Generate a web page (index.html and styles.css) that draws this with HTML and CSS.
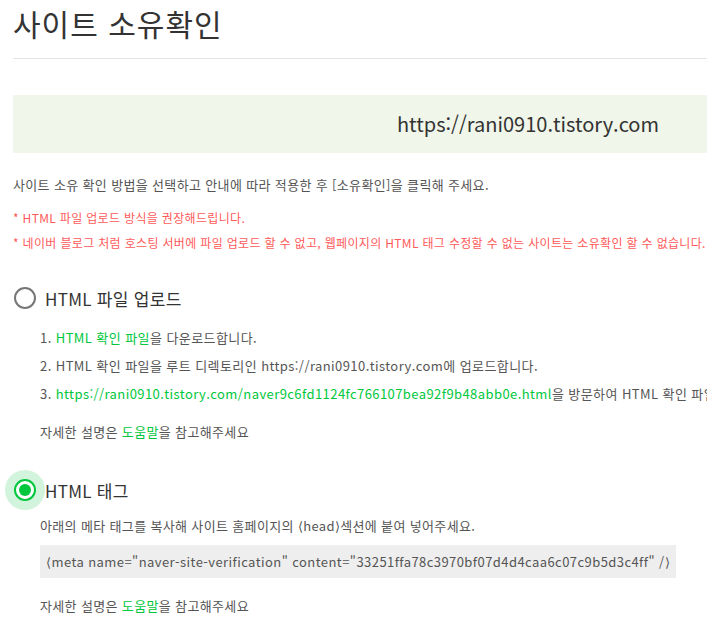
FILE: index.html
```html
<!DOCTYPE html>
<html lang="ko">
<head>
    <meta charset="UTF-8">
    <meta name="viewport" content="width=device-width, initial-scale=1.0">
    <title>사이트 소유확인</title>
    <link rel="stylesheet" href="styles.css">
</head>
<body>
    <div class="container">
        <h1 class="page-title">사이트 소유확인</h1>

        <div class="site-bar">https://rani0910.tistory.com</div>

        <p class="intro">사이트 소유 확인 방법을 선택하고 안내에 따라 적용한 후 [소유확인]을 클릭해 주세요.</p>
        <p class="notice">* HTML 파일 업로드 방식을 권장해드립니다.</p>
        <p class="notice">* 네이버 블로그 처럼 호스팅 서버에 파일 업로드 할 수 없고, 웹페이지의 HTML 태그 수정할 수 없는 사이트는 소유확인 할 수 없습니다.</p>

        <div class="method">
            <label class="method-head">
                <span class="radio"></span>
                <span class="method-title">HTML 파일 업로드</span>
            </label>
            <div class="method-body">
                <ol class="steps">
                    <li>1. <a class="link">HTML 확인 파일</a>을 다운로드합니다.</li>
                    <li>2. HTML 확인 파일을 루트 디렉토리인 https://rani0910.tistory.com에 업로드합니다.</li>
                    <li>3. <a class="link">https://rani0910.tistory.com/naver9c6fd1124fc766107bea92f9b48abb0e.html</a>을 방문하여 HTML 확인 파일이 정상적으로 보이는지 확인합니다.</li>
                </ol>
                <p class="help">자세한 설명은 <a class="link">도움말</a>을 참고해주세요</p>
            </div>
        </div>

        <div class="method">
            <label class="method-head">
                <span class="radio checked"></span>
                <span class="method-title">HTML 태그</span>
            </label>
            <div class="method-body">
                <p class="desc">아래의 메타 태그를 복사해 사이트 홈페이지의 &lang;head&rang;섹션에 붙여 넣어주세요.</p>
                <div class="code">&lang;meta name="naver-site-verification" content="33251ffa78c3970bf07d4d4caa6c07c9b5d3c4ff" /&rang;</div>
                <p class="help">자세한 설명은 <a class="link">도움말</a>을 참고해주세요</p>
            </div>
        </div>
    </div>
</body>
</html>
```

FILE: styles.css
```css
html, body {
    overflow: hidden;
}

body {
    margin: 0;
    font-family: "Noto Sans CJK KR", "Noto Sans", sans-serif;
    color: #555;
    background-color: #fff;
}

.container {
    width: 1030px;
    margin-left: 13px;
}

.page-title {
    margin: 0;
    padding: 0 0 12px;
    font-size: 30px;
    font-weight: 400;
    line-height: 46px;
    color: #333;
    border-bottom: 1px solid #e3e3e3;
    letter-spacing: 1px;
}

.site-bar {
    margin-top: 36px;
    height: 58px;
    line-height: 58px;
    background-color: #f0f6e9;
    text-align: center;
    font-size: 20px;
    color: #333;
}

p {
    margin: 0;
}

.intro {
    margin-top: 22px;
    font-size: 13px;
    line-height: 20px;
    letter-spacing: 0.35px;
}

.notice {
    margin-top: 13px;
    font-size: 12px;
    line-height: 20px;
    color: #ff5a5a;
    letter-spacing: 0.33px;
}

.notice + .notice {
    margin-top: 5px;
}

.method {
    margin-top: 32px;
}

.method + .method {
    margin-top: 31px;
}

.method-head {
    display: flex;
    align-items: center;
    height: 26px;
}

.radio {
    position: relative;
    box-sizing: border-box;
    width: 22px;
    height: 22px;
    margin-left: 1px;
    border: 2px solid #777;
    border-radius: 50%;
}

.radio.checked {
    border-color: #00c73c;
    background-color: #fff;
}

.radio.checked::before {
    content: "";
    position: absolute;
    left: -11px;
    top: -11px;
    width: 40px;
    height: 40px;
    border-radius: 50%;
    background-color: #d2f4dc;
    z-index: -1;
}

.radio.checked::after {
    content: "";
    position: absolute;
    left: 3px;
    top: 3px;
    width: 12px;
    height: 12px;
    border-radius: 50%;
    background-color: #00c73c;
}

.method-title {
    margin-left: 9px;
    font-size: 17px;
    color: #333;
    letter-spacing: 0.3px;
}

.method-body {
    padding-left: 27px;
    font-size: 13px;
}

.steps {
    list-style: none;
    margin: 13px 0 0;
    padding: 0;
    white-space: nowrap;
}

.steps li {
    line-height: 28px;
    letter-spacing: 0.42px;
}

.link {
    color: #00c73c;
}

.help {
    margin-top: 10px;
    line-height: 28px;
    letter-spacing: 0.35px;
}

.desc {
    margin-top: 12px;
    line-height: 22px;
    white-space: nowrap;
    letter-spacing: 0.35px;
}

.code {
    display: inline-block;
    margin-top: 8px;
    padding: 0 6px;
    height: 33px;
    line-height: 33px;
    background-color: #eee;
    white-space: nowrap;
    letter-spacing: 0.43px;
}

.code + .help {
    margin-top: 14px;
}
```
